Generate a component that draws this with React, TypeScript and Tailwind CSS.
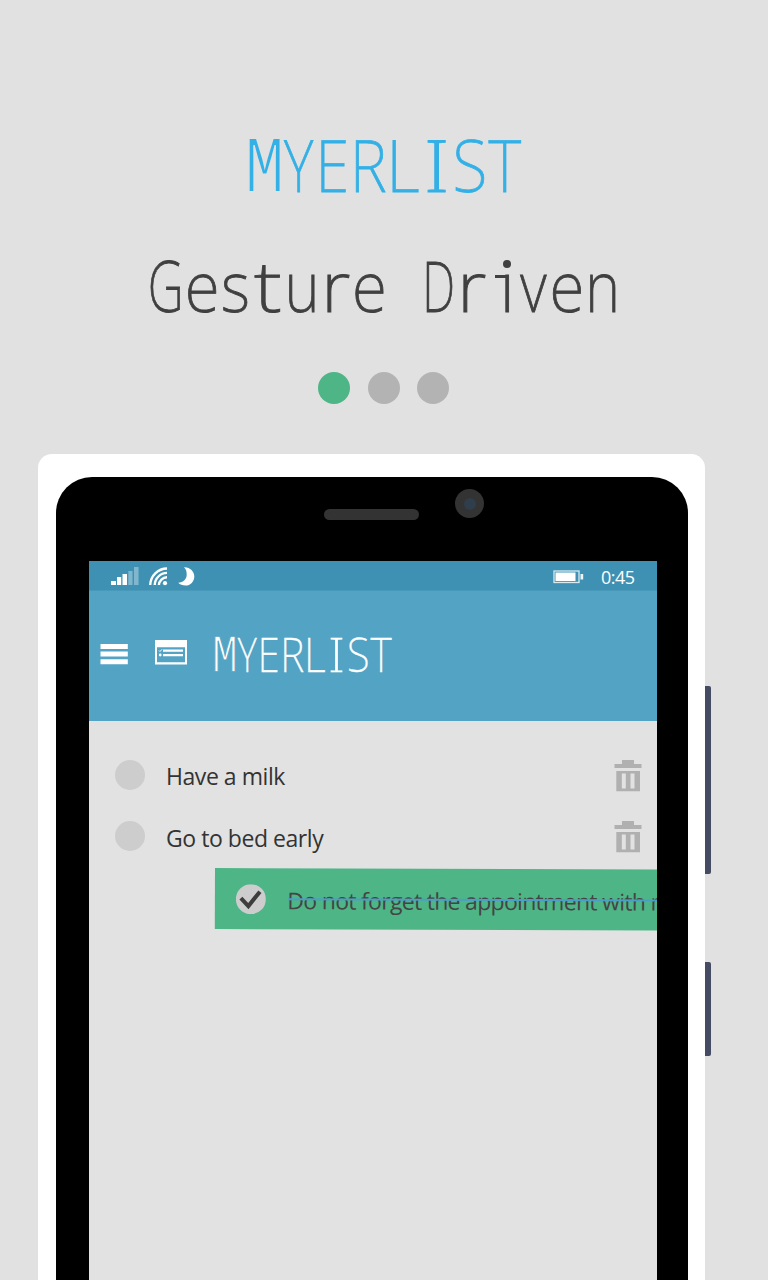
import React from "react";

type Glyph = { c: string; sx: number; dx?: number; kind?: "mono" | "hook" };

const TITLE: Glyph[] = [
  { c: "M", sx: 0.81, kind: "mono" },
  { c: "Y", sx: 0.78 },
  { c: "E", sx: 0.84, dx: -0.008 },
  { c: "R", sx: 0.87, dx: 0.012 },
  { c: "L", sx: 0.9, dx: 0.018 },
  { c: "I", sx: 1.3, dx: 0.012 },
  { c: "S", sx: 0.88, dx: -0.012 },
  { c: "T", sx: 0.87 },
];

const SUBTITLE: Glyph[] = [
  { c: "G", sx: 0.7 },
  { c: "e", sx: 0.9, dx: 0.038 },
  { c: "s", sx: 0.88, dx: 0.028 },
  { c: "t", sx: 1.2, dx: 0.02 },
  { c: "u", sx: 0.84, dx: 0.02 },
  { c: "r", sx: 1.08, dx: 0.03 },
  { c: "e", sx: 0.9, dx: 0.03 },
  { c: " ", sx: 1 },
  { c: "D", sx: 0.66, dx: 0.055 },
  { c: "r", sx: 1.08, dx: 0.042 },
  { c: "i", sx: 1, dx: 0.076, kind: "hook" },
  { c: "v", sx: 0.83, dx: -0.02 },
  { c: "e", sx: 0.9, dx: -0.035 },
  { c: "n", sx: 0.84 },
];

/* Evenly pitched lettering: each glyph is fitted to a fixed-width cell. */
function Lettering({ glyphs, cell, thin, bold }: { glyphs: Glyph[]; cell: string; thin: string; bold: string }) {
  return (
    <span className="flex items-baseline whitespace-pre font-['Noto_Sans',sans-serif] font-extralight">
      {glyphs.map((g, i) => (
        <span key={i} className={`relative flex shrink-0 justify-center ${cell}`}>
          <span
            className={g.kind === "mono" ? `font-['Liberation_Mono',monospace] text-[1.13em] ${thin}` : bold}
            style={{ transform: `translateX(${g.dx ?? 0}em) scaleX(${g.sx})` }}
          >
            {g.c}
          </span>
          {g.kind === "hook" && (
            <>
              <span className="absolute left-[10px] top-[35px] h-[2.5px] w-[12px] bg-current" />
              <span className="absolute left-[18.5px] top-[20px] size-[7.5px] rounded-full bg-current" />
            </>
          )}
        </span>
      ))}
    </span>
  );
}

function Signal() {
  return (
    <svg width="28" height="19" viewBox="0 0 28 19" fill="#fff">
      <rect x="0" y="14" width="5" height="4" />
      <rect x="6" y="10" width="4.2" height="8" />
      <rect x="11.5" y="7" width="4.5" height="11" />
      <rect x="17.3" y="4" width="4.2" height="14" opacity=".35" />
      <rect x="23" y="0" width="4.5" height="18" opacity=".35" />
    </svg>
  );
}

function Wifi() {
  return (
    <svg width="19" height="19" viewBox="0 0 19 19" fill="none" stroke="#fff" strokeWidth="2.4">
      <path d="M1.200 18A17 17 0 0 1 18 1.500M5.700 18A12.500 12.500 0 0 1 18 5.900M9.900 18A8.300 8.300 0 0 1 18 10.200" />
      <circle cx="16" cy="16.200" r="2.100" fill="#fff" stroke="none" />
    </svg>
  );
}

function Moon() {
  return (
    <svg width="17" height="19" viewBox="0 0 17 19" fill="#fff">
      <path d="M6 .3C12 0 16.300 4.500 16.300 9.400C16.300 14.500 12.500 18.500 7.500 18.500C4.500 18.500 2 17.500 .2 15.700C5.500 15.500 8.700 12 8.700 7.500C8.700 4.500 8 2 6 .3Z" />
    </svg>
  );
}

function Battery() {
  return (
    <svg width="31" height="14" viewBox="0 0 31 14">
      <rect x="1" y="1" width="25" height="11.500" fill="none" stroke="#fff" strokeOpacity=".8" strokeWidth="1.300" />
      <rect x="2.500" y="2.500" width="20" height="8.500" fill="#fff" />
      <rect x="27.500" y="4" width="2.700" height="5.500" fill="#fff" fillOpacity=".9" />
    </svg>
  );
}

function Menu() {
  return (
    <svg width="28" height="21" viewBox="0 0 28 21" fill="#fff">
      <path d="M.5 0h27.300v5H.5zM.5 7.600h27.300v5H.5zM.5 15.200h27.300v5H.5z" />
    </svg>
  );
}

function ListIcon() {
  return (
    <svg width="32" height="25" viewBox="0 0 32 25">
      <path fill="#fff" fillRule="evenodd" d="M0 0h32v24.500H0zM2 7.300v15h28v-15z" />
      <path fill="#fff" d="M8 9.500h20v2.200H8zM8 14h20v2.200H8z" />
      <path d="M4 10.500l1 1L7 9.300" stroke="#fff" fill="none" strokeWidth="1" />
      <circle cx="5.200" cy="15" r="1.400" fill="#fff" />
    </svg>
  );
}

function Trash() {
  return (
    <svg className="mt-[2px]" width="28" height="32" viewBox="0 0 28 32" fill="#b0b0b0">
      <path d="M8 0h12v4h7.500v4H.5V4H8z" />
      <path fillRule="evenodd" d="M2.300 11H26v20.200H2.300zM7.800 13.500v15h4v-15zM16.500 13.500v15h4v-15z" />
    </svg>
  );
}

function Task({ text }: { text: string }) {
  return (
    <li className="flex h-[61.5px] items-center pl-[26px] pr-[15px]">
      <span className="size-[30px] rounded-full bg-[#cdcdcd]" />
      <span className="ml-[21px] flex-1 pt-[3px] text-[23px] tracking-[-0.45px] text-[#333]">{text}</span>
      <Trash />
    </li>
  );
}

export default function App() {
  return (
    <main className="flex h-[1280px] w-[768px] flex-col overflow-hidden bg-[#e1e1e1] font-['Open_Sans',sans-serif]">
      <header className="flex h-[454px] flex-col pt-[119px]">
        <h1 className="h-[90px] pl-[247px] text-[72.5px] leading-[90px] text-[#33b0e6]">
          <Lettering
            glyphs={TITLE}
            cell="w-[34.4px]"
            thin="[-webkit-text-stroke:1.8px_#e1e1e1]"
            bold="[-webkit-text-stroke:0.8px_currentColor]"
          />
        </h1>
        <h2 className="mt-[31px] h-[90px] pl-[149px] text-[71px] leading-[90px] text-[#404040]">
          <Lettering
            glyphs={SUBTITLE}
            cell="w-[33.6px]"
            thin="[-webkit-text-stroke:1.8px_#e1e1e1]"
            bold="[-webkit-text-stroke:0.9px_currentColor]"
          />
        </h2>
        <div className="mt-[42px] flex gap-[17.5px] pl-[318px]">
          <span className="size-8 rounded-full bg-[#4db586]" />
          <span className="size-8 rounded-full bg-[#b3b3b3]" />
          <span className="size-8 rounded-full bg-[#b3b3b3]" />
        </div>
      </header>
      <div className="flex flex-1 pl-[38px]">
        <div className="w-[667px] rounded-t-[14px] bg-white pl-[18px] pt-[23px]">
          <div className="h-full w-[631.5px] rounded-t-[36px] bg-black px-[33px]">
            <div className="flex h-[84px] pl-[235px] pt-[12px]">
              <span className="mt-[20px] h-[11px] w-[95px] rounded-full bg-[#333]" />
              <span className="ml-[36px] flex size-[29px] items-center justify-center rounded-full bg-[#333]">
                <span className="size-[12px] rounded-full bg-[#303d4a]" />
              </span>
            </div>
            <div className="h-[719px] w-[568px] overflow-hidden bg-[#e2e2e2]">
              <div className="flex h-[29px] items-start bg-[#3e91b3] pl-[22px] pt-[6px]">
                <Signal />
                <span className="ml-[10px]"><Wifi /></span>
                <span className="ml-[10px]"><Moon /></span>
                <span className="ml-[358px] mt-[3px]"><Battery /></span>
                <span className="ml-[17px] text-[18px] leading-[20px] tracking-[-0.5px] text-white">0:45</span>
              </div>
              <div className="flex h-[131px] items-start border-t border-[#4898b9] bg-[#52a3c4] pl-[11px]">
                <span className="mt-[53px]"><Menu /></span>
                <span className="ml-[27px] mt-[49px]"><ListIcon /></span>
                <span className="ml-[26.5px] mt-[33px] text-[47px] leading-[60px] text-white">
                  <Lettering
                    glyphs={TITLE}
                    cell="w-[22.3px]"
                    thin="[-webkit-text-stroke:1.3px_#52a3c4]"
                    bold="[-webkit-text-stroke:0.4px_currentColor]"
                  />
                </span>
              </div>
              <ul className="pt-[23px]">
                <Task text="Have a milk" />
                <Task text="Go to bed early" />
                <li className="ml-[126px] mt-[1px] flex h-[61px] w-[500px] origin-top-left rotate-[0.2deg] items-center whitespace-nowrap bg-[#4db586] pl-[21px]">
                  <svg width="30" height="30" viewBox="0 0 30 30">
                    <circle cx="15" cy="15" r="15" fill="#cdcdcd" />
                    <path d="M5 14l7.500 8L24 7.500" fill="none" stroke="#3d3d3d" strokeWidth="4" />
                  </svg>
                  <span className="relative ml-[21.5px] pt-[3px] text-[23px] tracking-[-0.7px] text-[#444]">
                    Do not forget the appointment with my
                    <span className="absolute inset-x-0 top-[18px] h-[2px] bg-[#4b9fc6]" />
                  </span>
                </li>
              </ul>
            </div>
          </div>
        </div>
        <div className="flex w-[6px] flex-col pt-[231.500px]">
          <span className="h-[188.500px] rounded-r-[2px] bg-[#444b63]" />
          <span className="mt-[88px] h-[93.500px] rounded-r-[2px] bg-[#444b63]" />
        </div>
      </div>
    </main>
  );
}
